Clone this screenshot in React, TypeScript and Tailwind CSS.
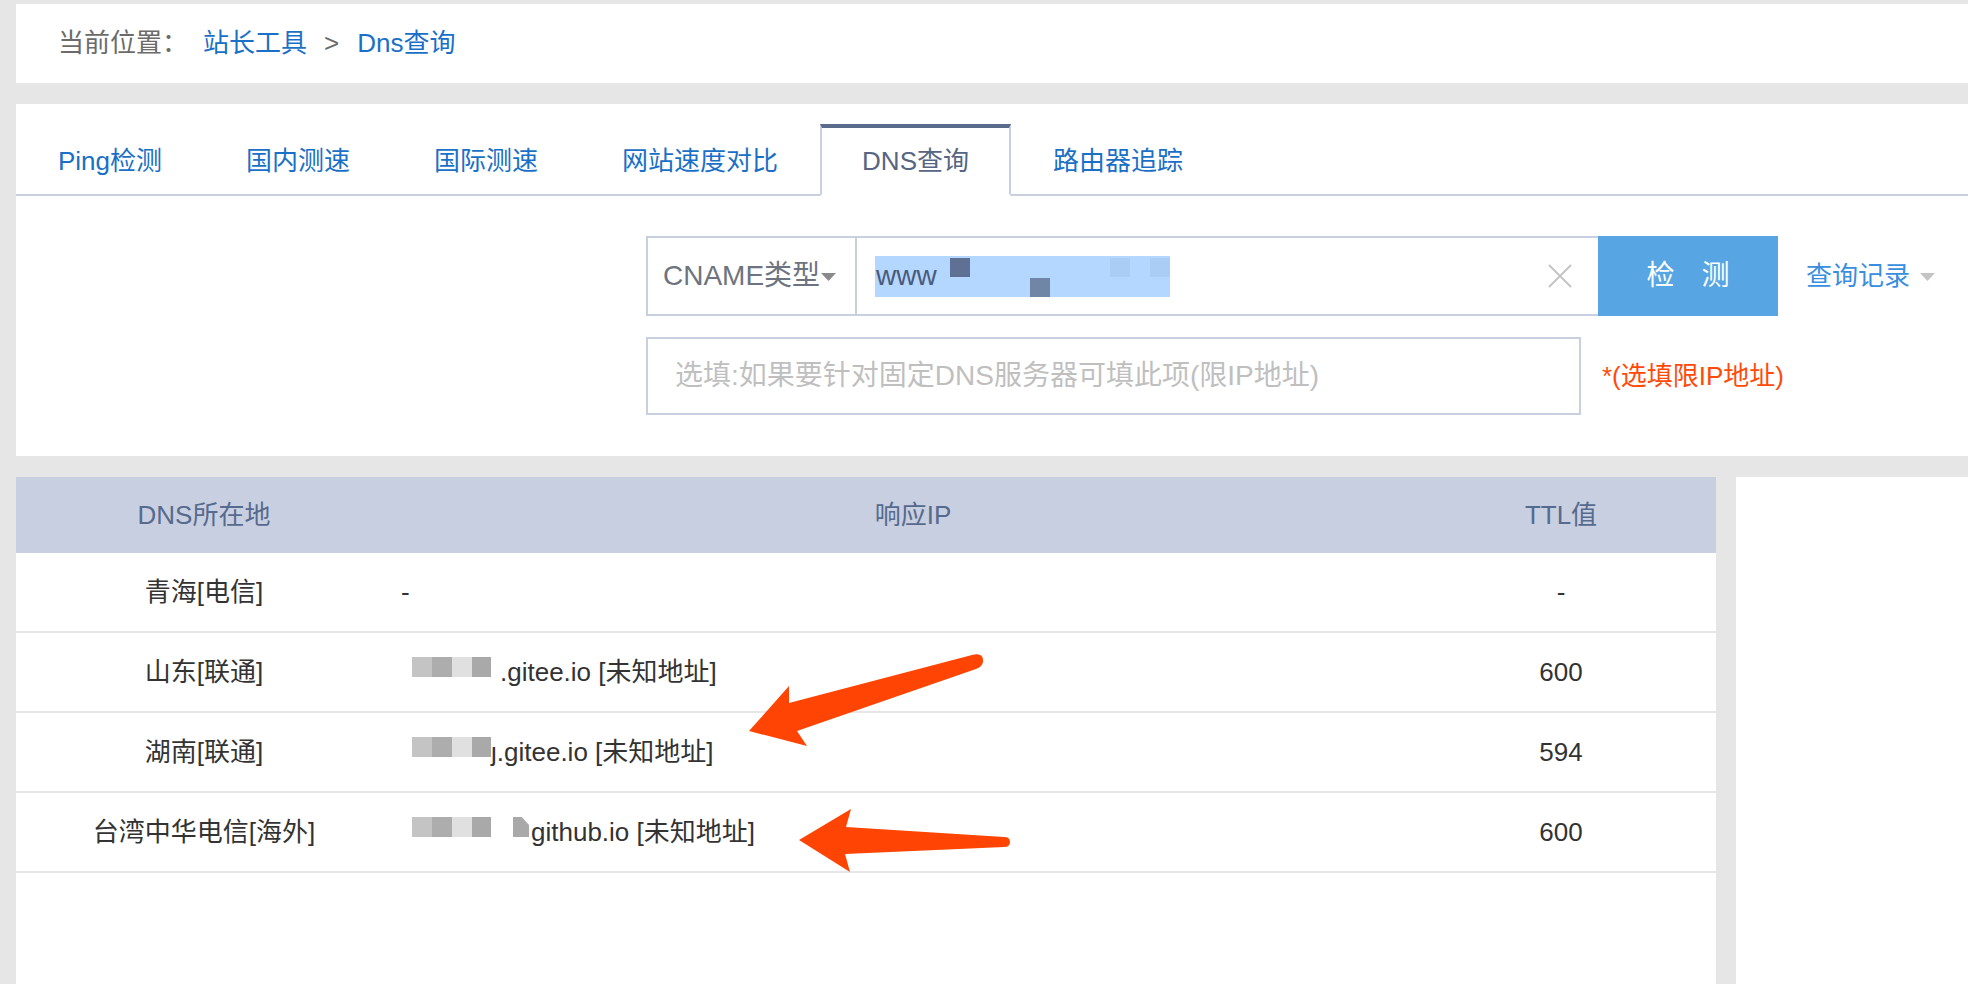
import React from "react";

const tabs = ["Ping检测", "国内测速", "国际测速", "网站速度对比", "DNS查询", "路由器追踪"];

function Mosaic() {
  return (
    <div className="mb-[10px] flex h-[20px]">
      <div className="w-[20px] bg-[#c4c4c4]" />
      <div className="w-[20px] bg-[#adadad]" />
      <div className="w-[20px] bg-[#e0e0e0]" />
      <div className="w-[19px] bg-[#a9a9a9]" />
    </div>
  );
}

function Caret({ color }: { color: string }) {
  return (
    <svg width="15" height="8" viewBox="0 0 15 8">
      <polygon points="0,0 15,0 7.5,8" fill={color} />
    </svg>
  );
}

const rows = [
  { loc: "青海[电信]", ip: null, ttl: "-" },
  { loc: "山东[联通]", ip: "a", ttl: "600" },
  { loc: "湖南[联通]", ip: "b", ttl: "594" },
  { loc: "台湾中华电信[海外]", ip: "c", ttl: "600" },
];

function IpCell({ kind }: { kind: string | null }) {
  if (!kind) return <span>-</span>;
  if (kind === "a")
    return (
      <>
        <div className="ml-[11px]">
          <Mosaic />
        </div>
        <span className="ml-[9px]">.gitee.io [未知地址]</span>
      </>
    );
  if (kind === "b")
    return (
      <>
        <div className="ml-[11px]">
          <Mosaic />
        </div>
        <span className="ml-[0px]">ȷ.gitee.io [未知地址]</span>
      </>
    );
  return (
    <>
      <div className="ml-[11px]">
        <Mosaic />
      </div>
      <div className="mb-[10px] ml-[22px] h-[20px] w-[16px] bg-[#a9a9a9] [clip-path:polygon(0_0,55%_0,100%_40%,100%_100%,0_100%)]" />
      <span className="ml-[2px]">github.io [未知地址]</span>
    </>
  );
}

export default function App() {
  return (
    <div className="relative min-h-screen w-full bg-[#e6e6e6] pl-[16px] pt-[4px] font-['Liberation_Sans','Noto_Sans_CJK_SC',sans-serif] text-[26px]">
      {/* Breadcrumb */}
      <div className="flex h-[79px] items-center bg-white pl-[42px] text-[#6b6b6b]">
        <span>当前位置：</span>
        <span className="ml-[15px] text-[#1a70c6]">站长工具</span>
        <span className="ml-[17px]">&gt;</span>
        <span className="ml-[18px] text-[#1a70c6]">Dns查询</span>
      </div>

      {/* Tool panel */}
      <div className="mt-[21px] h-[352px] bg-white pt-[20px]">
        <div className="flex h-[72px] border-b-2 border-[#c8d0e0]">
          {tabs.map((t) =>
            t === "DNS查询" ? (
              <div
                key={t}
                className="flex h-[72px] items-center border-x-2 border-b-2 border-t-4 border-x-[#c8d0e0] border-b-white border-t-[#5a6b8c] bg-white px-[40px] text-[#566583]"
              >
                {t}
              </div>
            ) : (
              <div
                key={t}
                className="flex h-[70px] items-center border-x-2 border-t-4 border-transparent px-[40px] text-[#1a70c6]"
              >
                {t}
              </div>
            )
          )}
        </div>

        {/* Query row */}
        <div className="mt-[40px] flex h-[80px] pl-[630px]">
          <div className="flex w-[211px] items-center border-2 border-[#c8d0e0] pl-[15px] text-[28px] text-[#6d7480]">
            <span>CNAME类型</span>
            <span className="ml-[1px] mt-[2px]">
              <Caret color="#8a8a8a" />
            </span>
          </div>
          <div className="flex w-[741px] items-center justify-between border-y-2 border-[#c8d0e0] pl-[18px] pr-[26px]">
            <div className="relative h-[41px] w-[295px] bg-[#b3d7fe]">
              <span className="absolute left-[1px] top-0 flex h-[41px] items-center text-[28px] text-[#4a5a7c]">
                www
              </span>
              <div className="absolute left-[75px] top-[2px] h-[19px] w-[20px] bg-[#5e7093]" />
              <div className="absolute left-[155px] top-[22px] h-[19px] w-[20px] bg-[#7185a6]" />
              <div className="absolute left-[235px] top-[2px] h-[19px] w-[20px] bg-[#aacdf5]" />
              <div className="absolute left-[275px] top-[2px] h-[19px] w-[20px] bg-[#aacdf5]" />
            </div>
            <svg width="24" height="24" viewBox="0 0 24 24">
              <path d="M1 1 L23 23 M23 1 L1 23" stroke="#c4c4c4" strokeWidth="2" />
            </svg>
          </div>
          <div className="flex w-[180px] items-center justify-center gap-[27px] bg-[#57a6e3] text-[28px] text-white">
            <span>检</span>
            <span>测</span>
          </div>
          <div className="ml-[28px] flex items-center text-[#3a8ee0]">
            <span>查询记录</span>
            <span className="ml-[10px] mt-[2px]">
              <Caret color="#c4c4c4" />
            </span>
          </div>
        </div>

        <div className="mt-[21px] flex h-[78px] pl-[630px]">
          <div className="flex w-[935px] items-center border-2 border-[#c8d0e0] pl-[27px] text-[28px] text-[#bfbfbf]">
            选填:如果要针对固定DNS服务器可填此项(限IP地址)
          </div>
          <div className="ml-[21px] flex items-center text-[#ff4a0a]">*(选填限IP地址)</div>
        </div>
      </div>

      {/* Results */}
      <div className="mt-[21px] flex h-[507px] gap-[20px]">
        <div className="w-[1700px] bg-white">
          <div className="grid h-[76px] grid-cols-[376px_1042px_282px] items-center bg-[#c8cfe0] text-[#566a8e]">
            <div className="text-center">DNS所在地</div>
            <div className="text-center">响应IP</div>
            <div className="pr-[28px] text-center">TTL值</div>
          </div>
          {rows.map((r) => (
            <div
              key={r.loc}
              className="grid h-[80px] grid-cols-[376px_1042px_282px] items-center border-b-2 border-[#e6e6e6] text-[#333]"
            >
              <div className="text-center">{r.loc}</div>
              <div className="flex items-center pl-[9px]">
                <IpCell kind={r.ip} />
              </div>
              <div className="pr-[28px] text-center">{r.ttl}</div>
            </div>
          ))}
        </div>
        <div className="flex-1 bg-white" />
      </div>

      {/* Annotation arrows */}
      <svg
        className="pointer-events-none absolute left-0 top-0"
        width="1968"
        height="984"
        viewBox="0 0 1968 984"
      >
        <path
          d="M789 703 L972 655 Q984 652 983 662 Q982 667 976 669 L797 731 L807 746 L749 731 L789 686 Z"
          fill="#ff4403"
        />
        <path
          d="M846 827 L1004 837 Q1010 837 1010 842 Q1010 847 1004 847 L845 854 L850 872 L799 840 L851 809 Z"
          fill="#ff4403"
        />
      </svg>
    </div>
  );
}
